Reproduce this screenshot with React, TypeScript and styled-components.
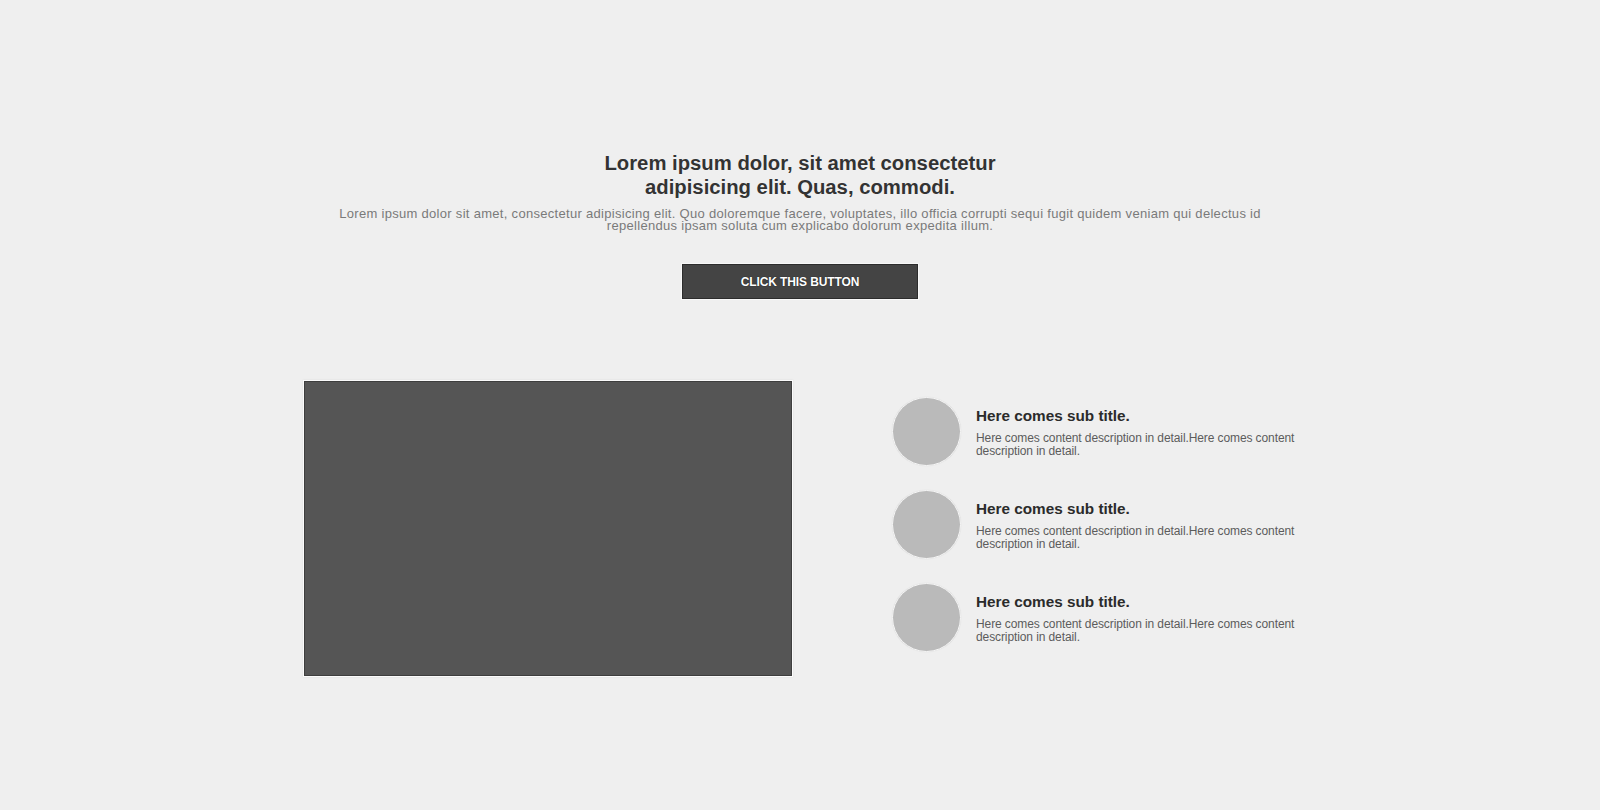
import React from "react";
import styled, { createGlobalStyle } from "styled-components";

const Global = createGlobalStyle`
  html, body { margin: 0; padding: 0; background: #efefef; }
  body { font-family: "Liberation Sans", Arial, sans-serif; }
`;

const Page = styled.div`
  width: 1600px;
  height: 810px;
  background: #efefef;
  display: flex;
  flex-direction: column;
  align-items: center;
  padding-top: 151px;
  box-sizing: border-box;
`;

const Hero = styled.section`
  display: flex;
  flex-direction: column;
  align-items: center;
  text-align: center;
`;

const Title = styled.h1`
  margin: 0;
  width: 420px;
  font-size: 20.3px;
  line-height: 24px;
  font-weight: 700;
  color: #333;
  text-shadow: 0 0 1px rgba(255, 255, 255, 0.8);
`;

const Lead = styled.p`
  margin: 9px 0 0;
  width: 940px;
  font-size: 13px;
  line-height: 11.5px;
  letter-spacing: 0.3px;
  color: #7a7a7a;
`;

const Button = styled.button`
  margin-top: 33px;
  width: 236px;
  height: 35px;
  background: #444;
  border: 1px solid #2c2c2c;
  box-shadow: 0 0 0 1px #f8f8f8;
  color: #fff;
  font-family: "Liberation Sans", Arial, sans-serif;
  font-size: 12px;
  font-weight: 700;
  letter-spacing: -0.1px;
  text-transform: uppercase;
  text-shadow: 0 0 1px rgba(0, 0, 0, 0.8);
  cursor: pointer;
`;

const Features = styled.section`
  margin-top: 82px;
  width: 992px;
  display: flex;
  align-items: flex-start;
  gap: 100px;
`;

const Media = styled.div`
  width: 486px;
  height: 293px;
  flex: none;
  background: #555;
  border: 1px solid #3e3e3e;
  box-shadow: 0 0 0 1px #fbfbfb, 0 0 2px 1px rgba(0, 0, 0, 0.08);
`;

const List = styled.ul`
  list-style: none;
  margin: 16px 0 0;
  padding: 0;
  flex: 1;
  display: flex;
  flex-direction: column;
  gap: 24px;
`;

const Item = styled.li`
  display: flex;
  align-items: center;
  gap: 15px;
`;

const Avatar = styled.div`
  width: 67px;
  height: 67px;
  flex: none;
  border-radius: 50%;
  background: #bababa;
  border: 1px solid #f7f7f7;
  box-shadow: 0 0 1px rgba(0, 0, 0, 0.15);
`;

const ItemText = styled.div`
  flex: 1;
  display: flex;
  flex-direction: column;
  padding-top: 2px;
`;

const SubTitle = styled.h3`
  margin: 0;
  font-size: 15.3px;
  line-height: 18px;
  font-weight: 700;
  color: #2b2b2b;
`;

const Desc = styled.p`
  margin: 7px 0 0;
  font-size: 12px;
  line-height: 13.5px;
  letter-spacing: -0.1px;
  color: #5c5c5c;
`;

const items = [0, 1, 2];

export default function App() {
  return (
    <>
      <Global />
      <Page>
        <Hero>
          <Title>Lorem ipsum dolor, sit amet consectetur adipisicing elit. Quas, commodi.</Title>
          <Lead>
            Lorem ipsum dolor sit amet, consectetur adipisicing elit. Quo doloremque facere, voluptates, illo officia corrupti sequi fugit quidem veniam qui delectus id repellendus ipsam soluta cum explicabo dolorum expedita illum.
          </Lead>
          <Button>Click this button</Button>
        </Hero>
        <Features>
          <Media />
          <List>
            {items.map((i) => (
              <Item key={i}>
                <Avatar />
                <ItemText>
                  <SubTitle>Here comes sub title.</SubTitle>
                  <Desc>Here comes content description in detail.Here comes content description in detail.</Desc>
                </ItemText>
              </Item>
            ))}
          </List>
        </Features>
      </Page>
    </>
  );
}
